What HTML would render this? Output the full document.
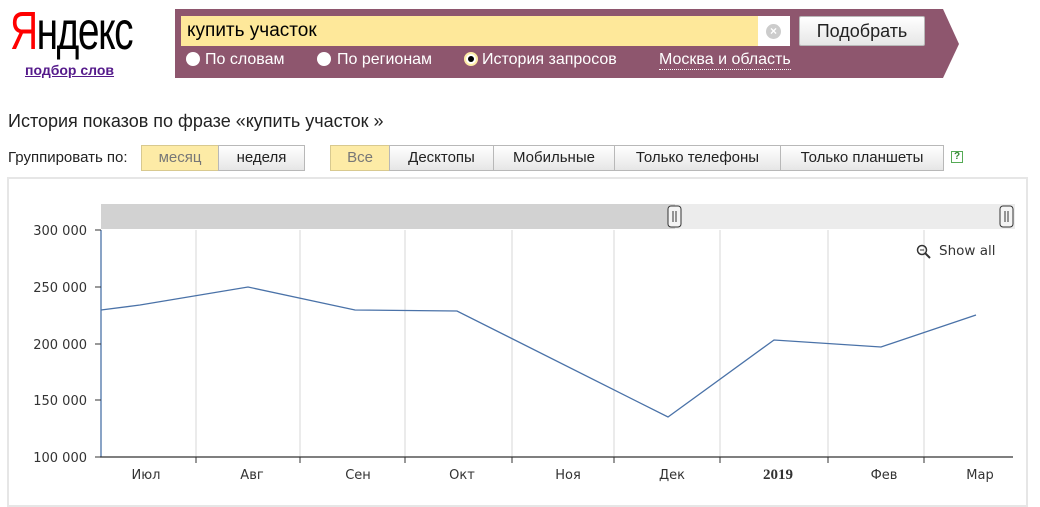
<!DOCTYPE html>
<html><head><meta charset="utf-8"><style>
*{margin:0;padding:0;box-sizing:border-box}
body{width:1040px;height:493px;background:#fff;font-family:"Liberation Sans",Arial,sans-serif;position:relative;overflow:hidden;color:#000}
.a{position:absolute}
.btn{position:absolute;height:26px;border:1px solid #b8b8b8;background:linear-gradient(#fff,#e6e6e6);font-size:15px;line-height:24px;text-align:center;color:#222}
.sel{background:#fdeba6;color:#777;border-color:#d8c98f}
.radio{position:absolute;top:52px;width:14px;height:14px;border-radius:50%;background:#fff}
</style></head><body>
<div class="a" style="left:10px;top:0px;font-size:54px;letter-spacing:-2px;transform:scaleX(0.72);transform-origin:left;font-family:'Liberation Sans Narrow','Liberation Sans',sans-serif"><span style="color:#f00">Я</span>ндекс</div>
<div class="a" style="left:25px;top:62px;font-size:14px;color:#551a8b;text-decoration:underline;font-weight:bold">подбор слов</div>
<svg class="a" style="left:175px;top:9px" width="785" height="70"><polygon points="0,0 768,0 784,35 768,69 0,69" fill="#8e566e"/></svg>
<div class="a" style="left:181px;top:16px;width:609px;height:30px;background:#fff"></div>
<div class="a" style="left:181px;top:16px;width:577px;height:30px;background:#fee89a;font-size:19px;line-height:30px;padding-left:6px">купить участок</div>
<div class="a" style="left:766px;top:24px;width:15px;height:15px;border-radius:50%;background:#ccc;color:#fff;font-size:12px;line-height:15px;text-align:center;font-weight:bold">×</div>
<div class="btn" style="left:799px;top:16px;width:126px;height:30px;line-height:28px;font-size:18px;border-radius:2px">Подобрать</div>
<div class="radio" style="left:186px"></div><div class="a" style="left:205px;top:51px;color:#fff;font-size:16px">По словам</div>
<div class="radio" style="left:317px"></div><div class="a" style="left:337px;top:51px;color:#fff;font-size:16px">По регионам</div>
<div class="radio" style="left:464px;border:2px solid #fdeba6;background:#fff"><div style="width:6px;height:6px;margin:2px;border-radius:50%;background:#000"></div></div><div class="a" style="left:482px;top:51px;color:#fff;font-size:16px">История запросов</div>
<div class="a" style="left:659px;top:51px;color:#fff;font-size:16px;border-bottom:1px dotted #fff;line-height:18px">Москва и область</div>
<div class="a" style="left:8px;top:111px;font-size:18px;color:#222">История показов по фразе «купить участок »</div>
<div class="a" style="left:8px;top:149px;font-size:15px;color:#222">Группировать по:</div>
<div class="btn sel" style="left:141px;top:145px;width:78px">месяц</div>
<div class="btn" style="left:218px;top:145px;width:87px">неделя</div>
<div class="btn sel" style="left:330px;top:145px;width:60px">Все</div>
<div class="btn" style="left:389px;top:145px;width:105px">Десктопы</div>
<div class="btn" style="left:493px;top:145px;width:122px">Мобильные</div>
<div class="btn" style="left:614px;top:145px;width:167px">Только телефоны</div>
<div class="btn" style="left:780px;top:145px;width:164px">Только планшеты</div>
<div class="a" style="left:951px;top:151px;width:12px;height:12px;border:1px solid #5a5;color:#383;font-size:10px;line-height:10px;text-align:center;font-weight:bold">?</div>
<div class="a" style="left:7px;top:177px;width:1021px;height:330px;border:2px solid #e6e6e6"></div>
<svg class="a" style="left:0;top:0" width="1040" height="493" font-family="DejaVu Sans,Verdana,sans-serif" font-size="13">
<rect x="101" y="204" width="914" height="25" fill="#ececec"/>
<rect x="101" y="204" width="574" height="25" fill="#d2d2d2"/>
<g stroke="#e0e0e0" stroke-width="1.3">
<line x1="196" y1="230" x2="196" y2="457"/><line x1="300" y1="230" x2="300" y2="457"/><line x1="405" y1="230" x2="405" y2="457"/><line x1="512" y1="230" x2="512" y2="457"/><line x1="614" y1="230" x2="614" y2="457"/><line x1="720" y1="230" x2="720" y2="457"/><line x1="828" y1="230" x2="828" y2="457"/><line x1="924" y1="230" x2="924" y2="457"/>
</g>
<line x1="101" y1="230" x2="101" y2="457" stroke="#4a72a8" stroke-width="1.3"/>
<line x1="100" y1="457" x2="1013" y2="457" stroke="#333" stroke-width="1.3"/>
<g stroke="#333"><line x1="196" y1="457" x2="196" y2="463"/><line x1="300" y1="457" x2="300" y2="463"/><line x1="405" y1="457" x2="405" y2="463"/><line x1="512" y1="457" x2="512" y2="463"/><line x1="614" y1="457" x2="614" y2="463"/><line x1="720" y1="457" x2="720" y2="463"/><line x1="828" y1="457" x2="828" y2="463"/><line x1="924" y1="457" x2="924" y2="463"/>
<line x1="95" y1="230" x2="101" y2="230"/><line x1="95" y1="287" x2="101" y2="287"/><line x1="95" y1="344" x2="101" y2="344"/><line x1="95" y1="400" x2="101" y2="400"/><line x1="95" y1="457" x2="101" y2="457"/></g>
<polyline fill="none" stroke="#4a72a8" stroke-width="1.3" points="101,310 140,305 248,287 355,310 457,311 668,417 774,340 881,347 976,315"/>
<g fill="#333" text-anchor="end"><text x="87" y="235">300 000</text><text x="87" y="292">250 000</text><text x="87" y="349">200 000</text><text x="87" y="405">150 000</text><text x="87" y="462">100 000</text></g>
<g fill="#333" text-anchor="middle"><text x="146" y="479">Июл</text><text x="252" y="479">Авг</text><text x="358" y="479">Сен</text><text x="462" y="479">Окт</text><text x="568" y="479">Ноя</text><text x="672" y="479">Дек</text><text x="778" y="479" font-weight="bold" font-family="Liberation Serif,serif" font-size="15">2019</text><text x="884" y="479">Фев</text><text x="980" y="479">Мар</text></g>
<g><rect x="668" y="206" width="13" height="21" rx="3" fill="#f4f4f4" stroke="#333"/><line x1="673" y1="211" x2="673" y2="222" stroke="#333"/><line x1="676" y1="211" x2="676" y2="222" stroke="#333"/>
<rect x="1000" y="206" width="13" height="21" rx="3" fill="#f4f4f4" stroke="#333"/><line x1="1005" y1="211" x2="1005" y2="222" stroke="#333"/><line x1="1008" y1="211" x2="1008" y2="222" stroke="#333"/></g>
<circle cx="922" cy="250" r="4.5" fill="none" stroke="#333" stroke-width="1.5"/><line x1="920" y1="250" x2="924" y2="250" stroke="#333"/><line x1="925" y1="253" x2="930" y2="258" stroke="#333" stroke-width="2"/>
<text x="939" y="255" fill="#333" font-size="13.5">Show all</text>
</svg>
</body></html>
